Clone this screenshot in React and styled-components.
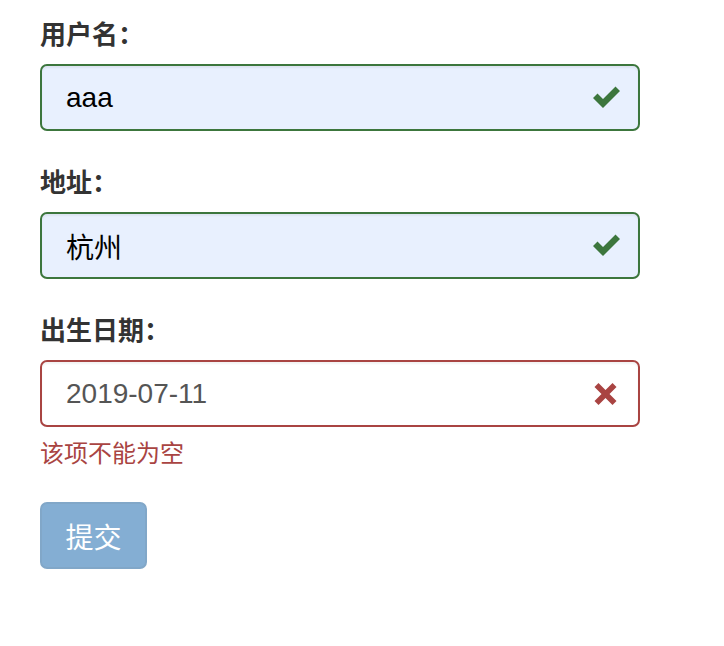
import React from 'react';
import styled, { createGlobalStyle } from 'styled-components';

const GlobalStyle = createGlobalStyle`
  html, body {
    margin: 0;
    padding: 0;
    background: #fff;
  }
  body {
    font-family: "Liberation Sans", "Noto Sans CJK SC", sans-serif;
    color: #333;
  }
`;

const Form = styled.form`
  width: 600px;
  padding: 18px 0 0 40px;
  display: flex;
  flex-direction: column;
`;

const Group = styled.div`
  display: flex;
  flex-direction: column;
  margin-bottom: ${props => props.last ? '33px' : '35px'};
`;

const Label = styled.label`
  font-size: 26px;
  font-weight: bold;
  line-height: 34px;
  color: #333;
  margin-bottom: 12px;
`;

const InputWrap = styled.div`
  position: relative;
  height: 67px;
  box-sizing: border-box;
  border: 2px solid ${props => props.error ? '#a94442' : '#3c763d'};
  border-radius: 7px;
  background: ${props => props.error ? '#fff' : '#e8f0fe'};
  box-shadow: inset 0 2px 2px rgba(0, 0, 0, 0.05);
  display: flex;
  align-items: center;
`;

const Input = styled.input`
  flex: 1;
  height: 100%;
  border: none;
  outline: none;
  background: transparent;
  padding: 0 70px 0 24px;
  font-family: "Liberation Sans", "Noto Sans CJK SC", sans-serif;
  font-size: 28px;
  color: ${props => props.error ? '#555' : '#000'};
`;

const Feedback = styled.span`
  position: absolute;
  right: 16px;
  top: 50%;
  transform: translateY(-50%);
  display: flex;
`;

const Help = styled.div`
  margin-top: 12px;
  font-size: 24px;
  line-height: 30px;
  color: #a94442;
`;

const Submit = styled.button`
  align-self: flex-start;
  width: 107px;
  height: 67px;
  border: 2px solid #2e6da4;
  border-radius: 7px;
  background: #337ab7;
  opacity: 0.6;
  color: #fff;
  font-family: "Liberation Sans", "Noto Sans CJK SC", sans-serif;
  font-size: 28px;
  cursor: not-allowed;
`;

const OkIcon = () => (
  <svg width="30" height="24" viewBox="0 0 30 24">
    <path d="M1 12 L5.5 7.5 L11 13 L23.5 0.5 L28 5 L11 22 Z" fill="#3c763d" />
  </svg>
);

const ErrIcon = () => (
  <svg width="30" height="24" viewBox="0 0 30 24">
    <path
      d="M6.5 1 L13.5 8 L20.5 1 L24.5 5 L17.5 12 L24.5 19 L20.5 23 L13.5 16 L6.5 23 L2.5 19 L9.5 12 L2.5 5 Z"
      fill="#a94442"
    />
  </svg>
);

const Field = ({ label, value, error, help, last }) => (
  <Group last={last}>
    <Label>{label}</Label>
    <InputWrap error={error}>
      <Input error={error} defaultValue={value} />
      <Feedback>{error ? <ErrIcon /> : <OkIcon />}</Feedback>
    </InputWrap>
    {help && <Help>{help}</Help>}
  </Group>
);

const App = () => (
  <>
    <GlobalStyle />
    <Form onSubmit={e => e.preventDefault()}>
      <Field label="用户名：" value="aaa" />
      <Field label="地址：" value="杭州" />
      <Field label="出生日期：" value="2019-07-11" error help="该项不能为空" last />
      <Submit type="submit">提交</Submit>
    </Form>
  </>
);

export default App;
